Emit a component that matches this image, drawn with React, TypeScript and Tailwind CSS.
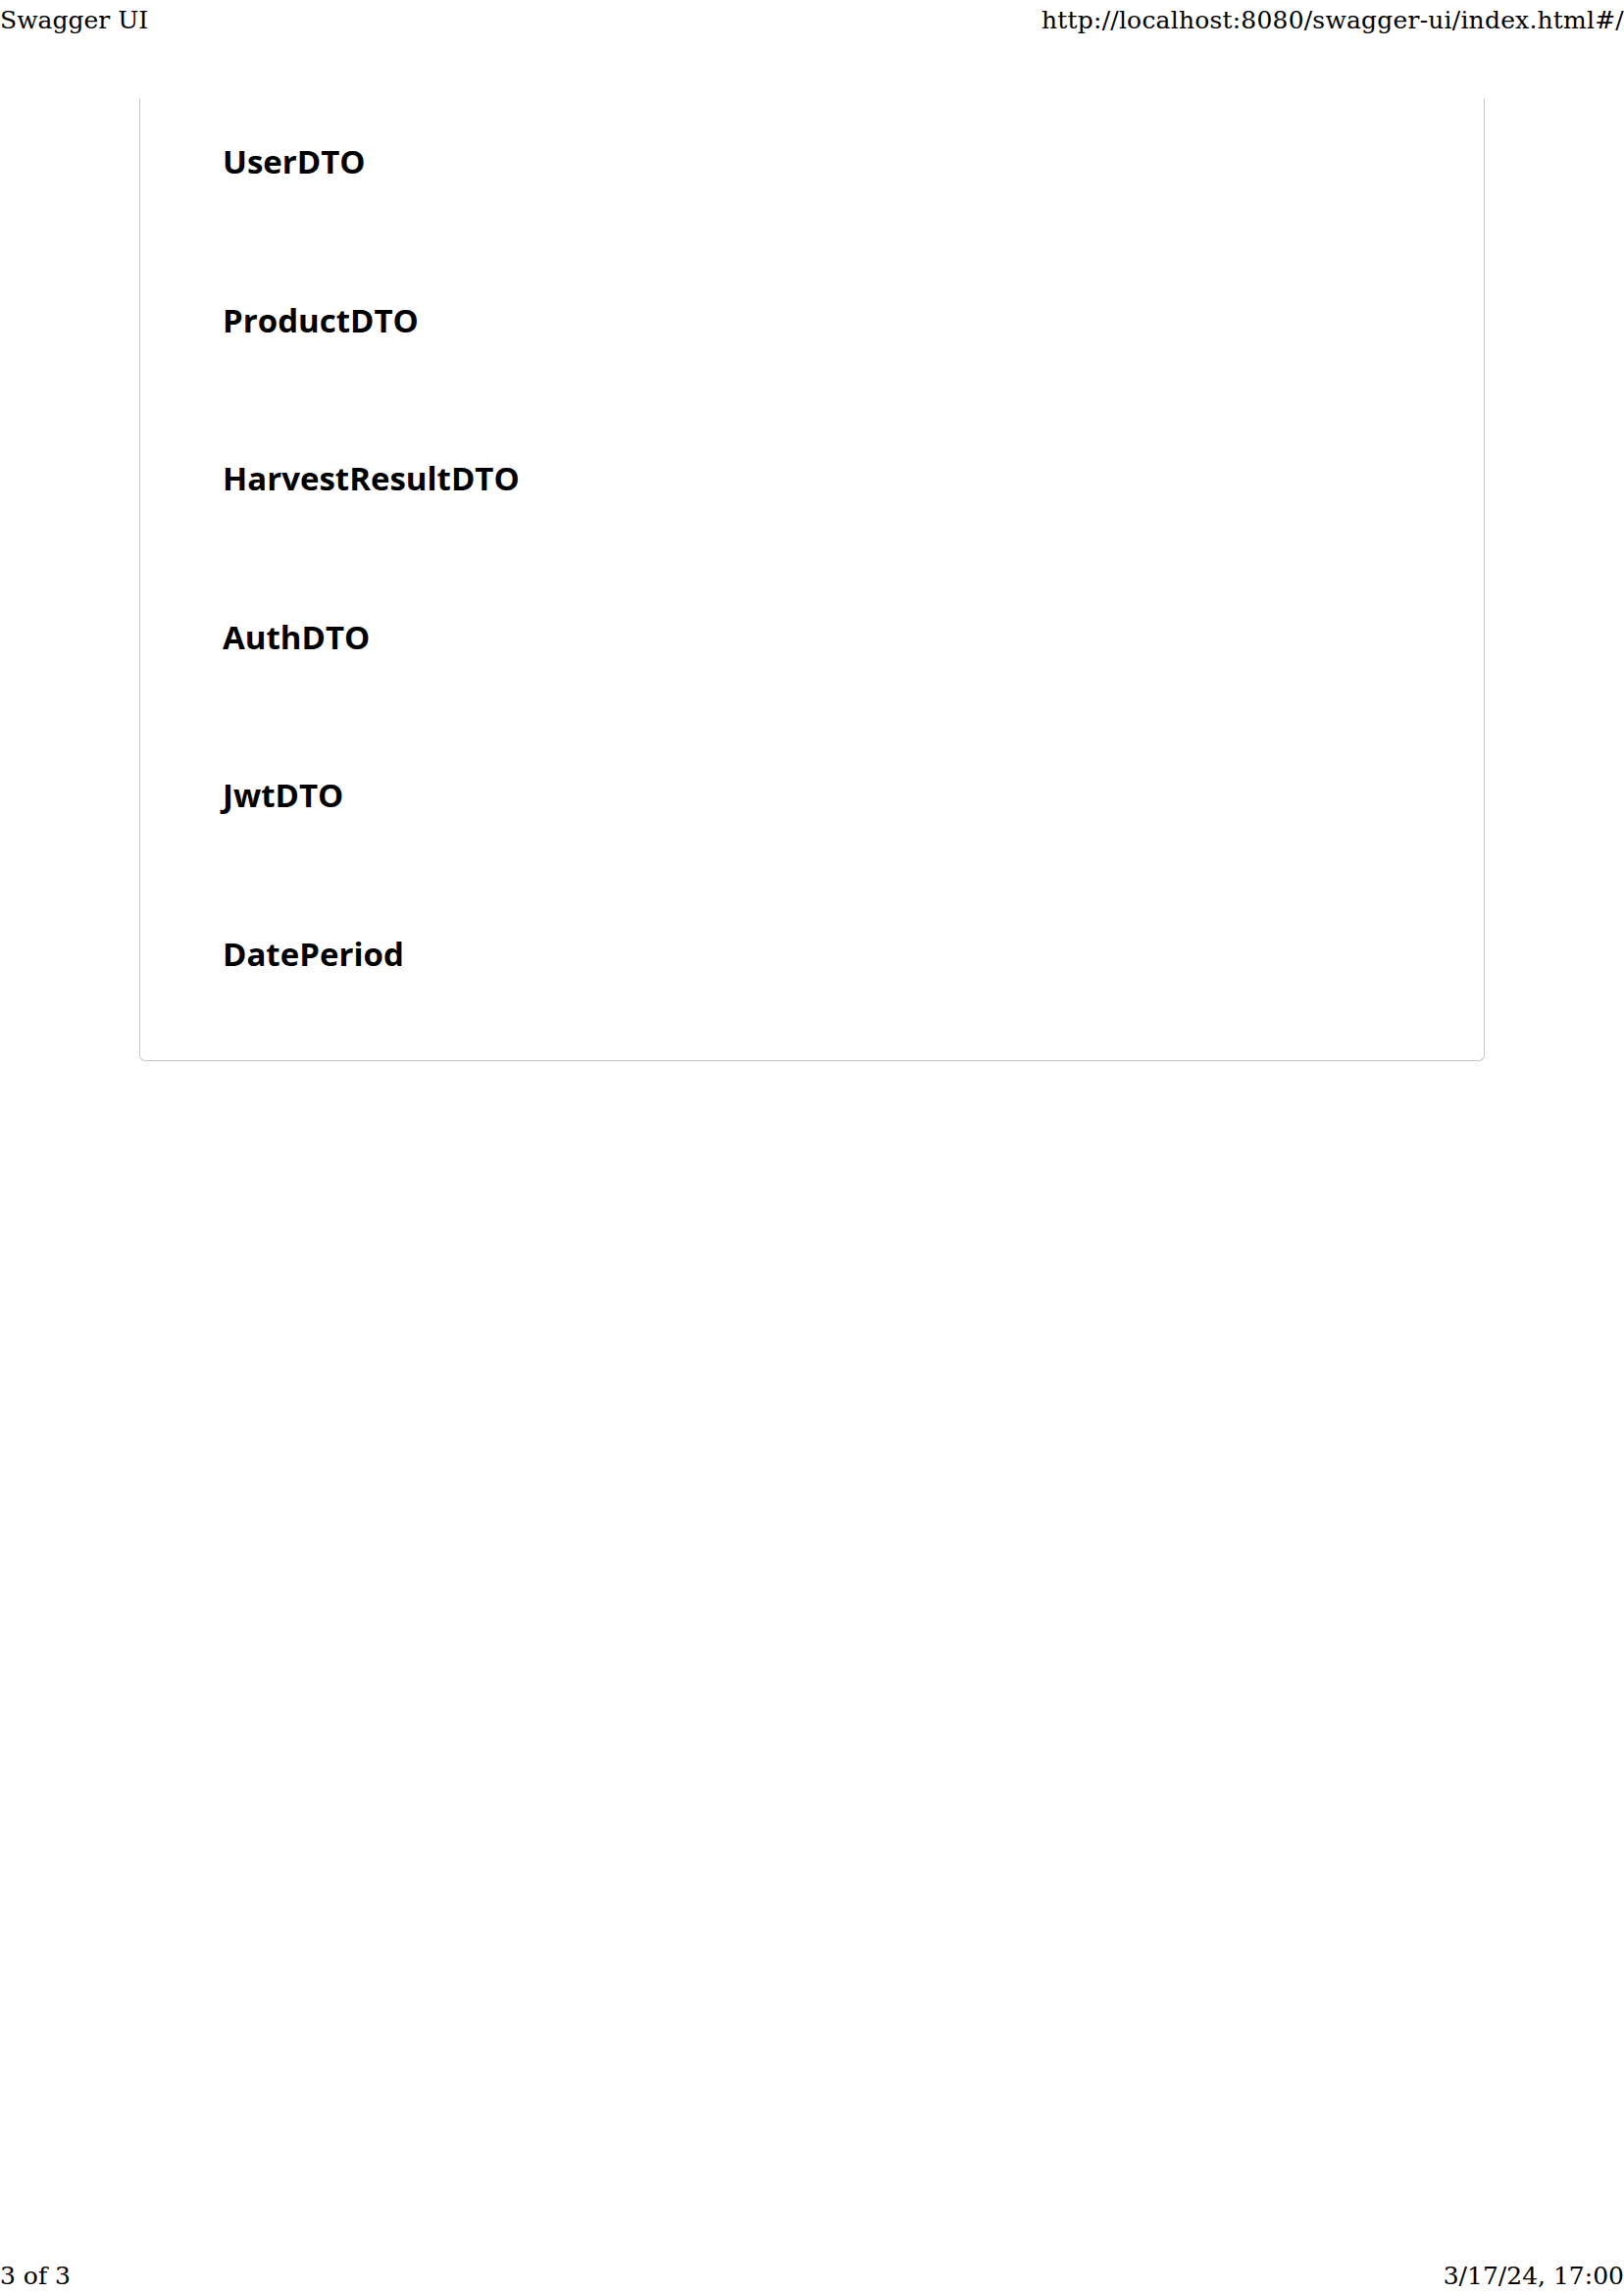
import React from 'react';

const models = ['UserDTO', 'ProductDTO', 'HarvestResultDTO', 'AuthDTO', 'JwtDTO', 'DatePeriod'];

const serif = { fontFamily: '"DejaVu Serif", serif' };

export default function App() {
  return (
    <div className="flex min-h-[2339px] w-[1656px] flex-col bg-white text-black">
      {/* print header */}
      <div
        className="flex h-[100px] items-start justify-between pt-[6px] text-[25px] leading-[29px]"
        style={serif}
      >
        <span>Swagger UI</span>
        <span className="tracking-[0.2px]">http://localhost:8080/swagger-ui/index.html#/</span>
      </div>

      {/* models section, continued from previous page */}
      <div className="mx-[142px] rounded-b-[6px] border border-t-0 border-[#c6c6c6] pt-[45px] pb-[88px] pl-[84px]">
        <div className="flex flex-col gap-[121.5px]">
          {models.map((m) => (
            <h4
              key={m}
              className="text-[33px] font-bold leading-[40px]"
              style={{ fontFamily: '"Open Sans", sans-serif' }}
            >
              {m}
            </h4>
          ))}
        </div>
      </div>

      <div className="flex-1" />

      {/* print footer */}
      <div
        className="flex h-[33px] items-start justify-between text-[25px] leading-[29px]"
        style={serif}
      >
        <span>3 of 3</span>
        <span>3/17/24, 17:00</span>
      </div>
    </div>
  );
}
